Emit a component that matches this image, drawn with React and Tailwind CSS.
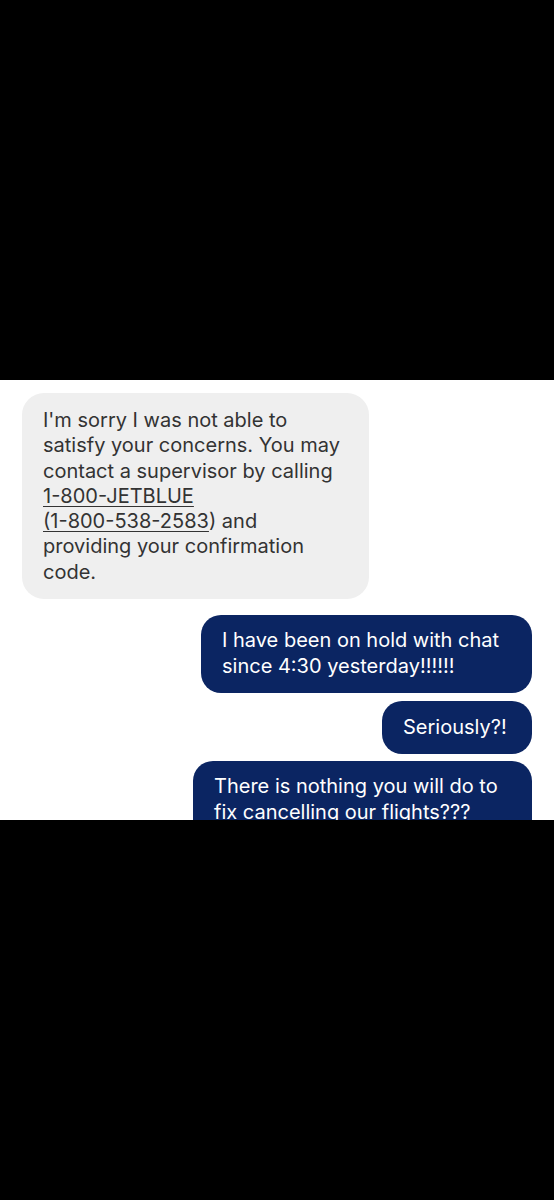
import React from "react";

function Theirs({ children }) {
    return (
        <div className="self-start shrink-0 ml-[22px] w-[347px] h-[206px] rounded-[22px] bg-[#efefef] pl-[21px] pt-[15px] text-[20px] leading-[25.3px] text-[#333333]">
            {children}
        </div>
    );
}

function Mine({ width, height, children }) {
    return (
        <div
            className="self-end shrink-0 mr-[22px] rounded-[20px] bg-[#0b2562] pl-[21px] text-[20px] leading-[26px] text-white"
            style={{ width, height }}
        >
            {children}
        </div>
    );
}

export default function App() {
    return (
        <div className="w-[554px] h-[1200px] bg-black flex flex-col font-['Inter','Liberation_Sans',Arial,sans-serif]">
            <div className="h-[380px] shrink-0" />
            <div className="h-[440px] shrink-0 bg-white overflow-hidden flex flex-col pt-[13px]">
                <Theirs>
                    I'm sorry I was not able to<br />
                    satisfy your concerns. You may<br />
                    contact a supervisor by calling<br />
                    <span className="underline underline-offset-[3px] decoration-1">1-800-JETBLUE</span><br />
                    <span className="underline underline-offset-[3px] decoration-1">(1-800-538-2583</span>) and<br />
                    providing your confirmation<br />
                    code.
                </Theirs>
                <div className="h-[16px] shrink-0" />
                <Mine width="331px" height="78px">
                    <div className="pt-[12px]">
                        I have been on hold with chat<br />
                        since 4:30 yesterday!!!!!!
                    </div>
                </Mine>
                <div className="h-[8px] shrink-0" />
                <Mine width="150px" height="53px">
                    <div className="pt-[13px]">Seriously?!</div>
                </Mine>
                <div className="h-[7px] shrink-0" />
                {/* cut off by the screenshot edge, as in the original */}
                <Mine width="339px" height="80px">
                    <div className="pt-[12px]">
                        There is nothing you will do to<br />
                        fix cancelling our flights???
                    </div>
                </Mine>
            </div>
            <div className="grow" />
        </div>
    );
}
